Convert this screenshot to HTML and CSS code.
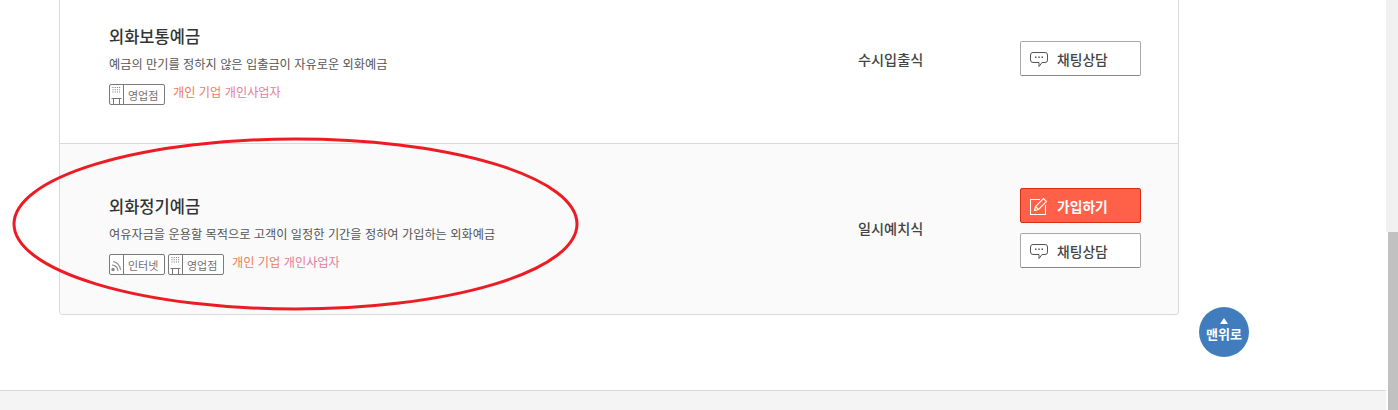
FILE: index.html
```html
<!DOCTYPE html>
<html lang="ko">
<head>
<meta charset="utf-8">
<title>외화예금</title>
<link rel="stylesheet" href="styles.css">
</head>
<body>
<div class="page">
  <main class="content">
    <ul class="list">
      <li class="row row-first">
        <div class="info">
          <h3 class="name">외화보통예금</h3>
          <p class="desc">예금의 만기를 정하지 않은 입출금이 자유로운 외화예금</p>
          <div class="meta">
            <span class="chip"><span class="chip-cell"><svg class="chip-icon" viewBox="0 0 13 19"><use href="#i-building"/></svg></span><span class="chip-text">영업점</span></span>
            <span class="who"><span class="w1">개인</span> <span class="w2">기업</span> <span class="w3">개인사업자</span></span>
          </div>
        </div>
        <div class="kind">수시입출식</div>
        <div class="actions">
          <a class="btn"><svg class="btn-icon" viewBox="0 0 18 18"><use href="#i-chat"/></svg>채팅상담</a>
        </div>
      </li>
      <li class="row row-alt">
        <div class="info">
          <h3 class="name">외화정기예금</h3>
          <p class="desc">여유자금을 운용할 목적으로 고객이 일정한 기간을 정하여 가입하는 외화예금</p>
          <div class="meta">
            <span class="chip"><span class="chip-cell"><svg class="chip-icon" viewBox="0 0 13 19"><use href="#i-rss"/></svg></span><span class="chip-text">인터넷</span></span>
            <span class="chip"><span class="chip-cell"><svg class="chip-icon" viewBox="0 0 13 19"><use href="#i-building"/></svg></span><span class="chip-text">영업점</span></span>
            <span class="who"><span class="w1">개인</span> <span class="w2">기업</span> <span class="w3">개인사업자</span></span>
          </div>
        </div>
        <div class="kind">일시예치식</div>
        <div class="actions">
          <a class="btn btn-primary"><svg class="btn-icon" viewBox="0 0 18 18"><use href="#i-edit"/></svg>가입하기</a>
          <a class="btn"><svg class="btn-icon" viewBox="0 0 18 18"><use href="#i-chat"/></svg>채팅상담</a>
        </div>
      </li>
    </ul>
    <a class="top-btn"><span class="top-arrow"></span>맨위로</a>
    <svg class="circle" viewBox="0 0 570 176"><ellipse cx="285.500" cy="88" rx="281.500" ry="85"/></svg>
  </main>
  <footer class="footer"></footer>
  <div class="scrollbar"><div class="thumb"></div></div>
</div>
<svg class="defs" aria-hidden="true">
  <symbol id="i-building" viewBox="0 0 13 19">
    <path d="M2.500 2h1v1h-1zM4.700 2h1v1h-1zM6.900 2h1v1h-1zM9.100 2h1v1h-1zM2.500 4.200h1v1h-1zM4.700 4.200h1v1h-1zM6.900 4.200h1v1h-1zM9.100 4.200h1v1h-1zM2.500 6.400h1v1h-1zM4.700 6.400h1v1h-1zM6.900 6.400h1v1h-1zM9.100 6.400h1v1h-1z" fill="#777"/>
    <path d="M1.500 13.500h10M3.500 19v-5.500M9.500 19v-5.500" fill="none" stroke="#777"/>
  </symbol>
  <symbol id="i-rss" viewBox="0 0 13 19">
    <circle cx="3" cy="14.500" r="1.700" fill="#8a8a8a"/>
    <path d="M2 10a6 6 0 0 1 6 6M3 6.500a9 9 0 0 1 7.500 8.500" fill="none" stroke="#8a8a8a" stroke-width="1.100"/>
  </symbol>
  <symbol id="i-chat" viewBox="0 0 18 18">
    <path d="M3 2.500h12a2.500 2.500 0 0 1 2.500 2.500v5a2.500 2.500 0 0 1-2.500 2.500h-3l-3 4v-4H3A2.500 2.500 0 0 1 .500 10V5A2.500 2.500 0 0 1 3 2.500z" fill="none" stroke="#555" stroke-width="1"/>
    <path d="M5 6.500h1.500V8H5zM8.250 6.500h1.500V8h-1.500zM11.500 6.500H13V8h-1.500z" fill="#555"/>
  </symbol>
  <symbol id="i-edit" viewBox="0 0 18 18">
    <path d="M10 2.500H.500v15h15V8" fill="none" stroke="#fff" stroke-width="1.100"/>
    <path d="M4.500 13.500l1-4L13.500 1.500l3 3-8 8zM5.500 9.500l3 3" fill="none" stroke="#fff" stroke-width="1.100"/>
  </symbol>
</svg>
</body>
</html>
```
FILE: styles.css
```css
* { box-sizing: border-box; }
html, body { margin: 0; padding: 0; height: 410px; overflow: hidden; background: #fff; }
body { font-family: "Noto Sans CJK KR", "Noto Sans", sans-serif; color: #333; }
.page { position: relative; width: 1398px; height: 410px; display: flex; flex-direction: column; }
.content { position: relative; height: 391px; border-bottom: 1px solid #d8d8d8; padding-left: 59px; flex: none; }
.list { list-style: none; margin: -1px 0 0; padding: 0; width: 1120px; border: 1px solid #d9d9d9; border-top: 0; border-radius: 0 0 4px 4px; }
.row { display: flex; align-items: center; }
.row-first { height: 144px; padding-bottom: 25px; }
.row-alt { height: 171px; padding-bottom: 2px; background: #fafafa; border-top: 1px solid #d9d9d9; border-radius: 0 0 4px 4px; }
.info { width: 798px; padding-left: 49px; align-self: flex-start; }
.row-first .info { margin-top: 26px; }
.row-alt .info { margin-top: 51px; }
.name { margin: 0; font-size: 16.500px; line-height: 22px; font-weight: 500; color: #333; }
.desc { margin: 9px 0 0; font-size: 12.200px; line-height: 16px; color: #555; }
.meta { display: flex; align-items: center; margin-top: 12px; gap: 3px; height: 21px; }
.chip { display: inline-flex; align-items: stretch; width: 56px; height: 21px; border: 1px solid #7a7a7a; border-radius: 2px; background: #fff; }
.chip-cell { display: block; width: 14px; flex: none; border-right: 1px solid #7a7a7a; }
.chip-icon { display: block; width: 13px; height: 19px; }
.chip-text { flex: 1; font-size: 11px; line-height: 20px; color: #707070; padding-left: 4px; white-space: nowrap; }
.who { margin-left: 5px; margin-top: -5px; font-size: 12.200px; line-height: 16px; white-space: nowrap; }
.w1 { color: #ec7a55; }
.w2 { color: #e67c68; }
.w3 { color: #e57c9a; }
.kind { width: 162px; font-size: 14.200px; font-weight: 500; color: #444; }
.actions { display: flex; flex-direction: column; gap: 10px; }
.btn { display: flex; align-items: center; width: 121px; height: 35px; padding-left: 9px; border: 1px solid #a9a9a9; border-bottom-color: #888; border-radius: 2px; background: #fff; font-size: 13.800px; font-weight: 500; color: #444; white-space: nowrap; }
.btn-icon { width: 18px; height: 18px; margin-right: 9px; flex: none; }
.btn-primary { background: #ff6048; border-color: #d92e10; color: #fff; font-weight: 700; }
.top-btn { position: absolute; left: 1199px; top: 307px; width: 50px; height: 50px; padding-bottom: 5px; border-radius: 50%; background: #417dbd; color: #fff; font-size: 13px; font-weight: 700; display: flex; flex-direction: column; align-items: center; justify-content: center; line-height: 17px; }
.top-arrow { width: 0; height: 0; border: 4.500px solid transparent; border-top: 0; border-bottom: 6px solid #fff; margin-bottom: 1px; }
.circle { position: absolute; left: 10px; top: 136px; width: 570px; height: 176px; overflow: visible; }
.circle ellipse { fill: none; stroke: #ed1c24; stroke-width: 3; }
.footer { flex: 1; background: #f4f4f4; margin-right: 12px; }
.scrollbar { position: absolute; right: 0; top: 0; width: 12px; height: 410px; background: #f1f1f1; }
.thumb { position: absolute; left: 0; right: 0; top: 232px; bottom: 0; background: #c1c1c1; border-left: 2px solid #fff; }
.defs { position: absolute; width: 0; height: 0; }
```
